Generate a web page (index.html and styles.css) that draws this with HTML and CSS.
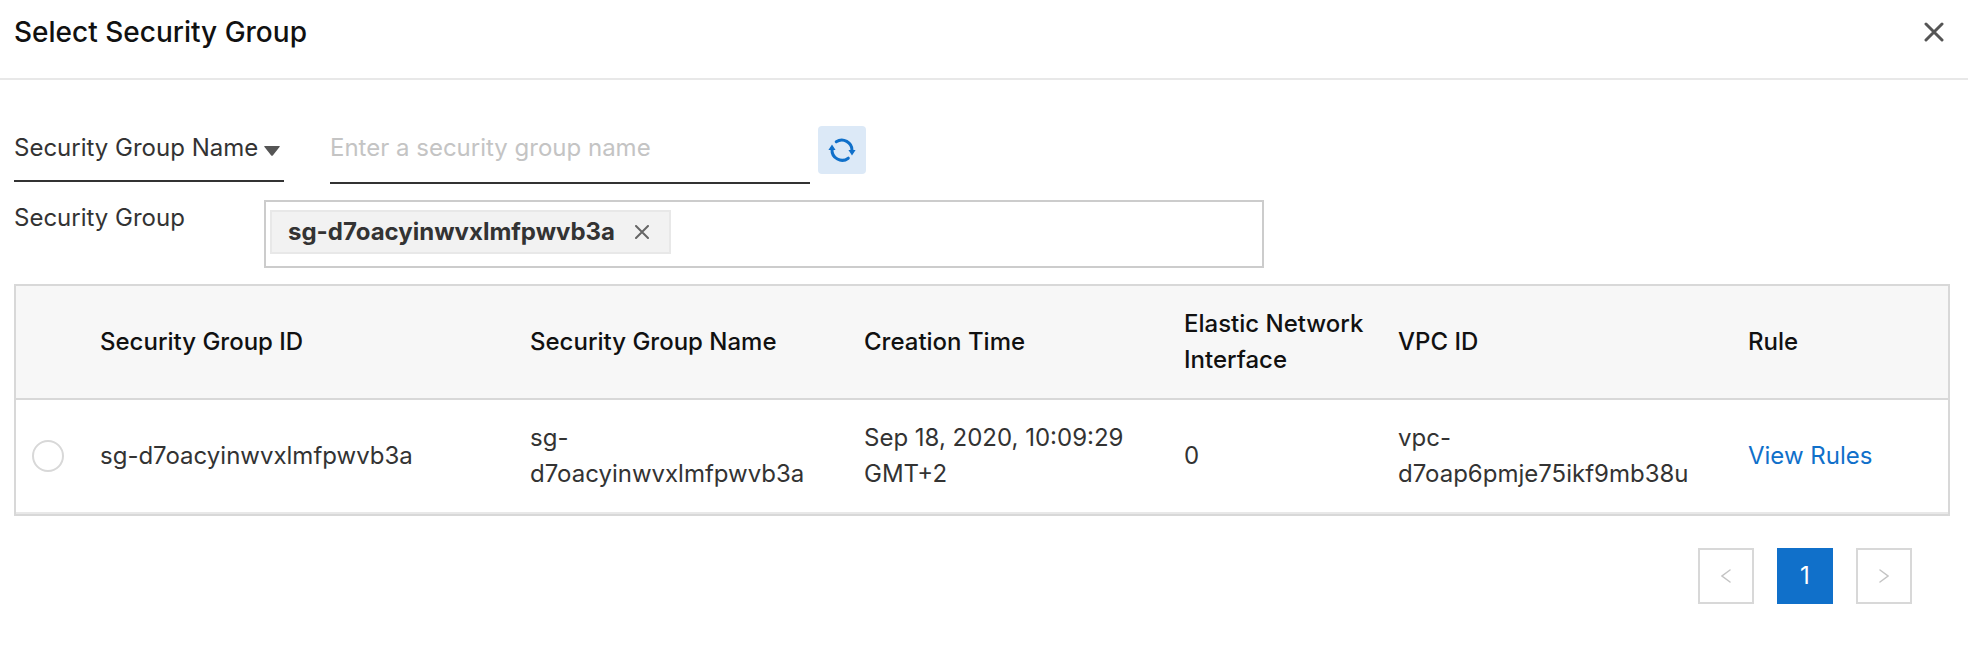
FILE: index.html
```html
<!DOCTYPE html>
<html lang="en">
<head>
<meta charset="utf-8">
<meta name="viewport" content="width=device-width, initial-scale=1">
<title>Select Security Group</title>
<link rel="stylesheet" href="styles.css">
</head>
<body>
<main class="dialog">
  <header class="dialog-header">
    <h1 class="dialog-title">Select Security Group</h1>
    <button class="close-button" type="button" aria-label="Close">
      <svg class="icon" width="20" height="20" viewBox="0 0 20 20"><path d="M2 2 18 18M18 2 2 18" stroke-width="3"/></svg>
    </button>
  </header>
  <div class="dialog-body">
    <form class="filters">
      <div class="filter-field">
        <select class="filter-select" aria-label="Filter by">
          <option>Security Group Name</option>
        </select>
        <svg class="caret" width="16" height="10" viewBox="0 0 16 10"><path d="M.5 0H15.500Q16 .5 15.500 1L9 9.300Q8 10.400 7 9.300L.5 1Q0 .5 .5 0Z"/></svg>
      </div>
      <input class="filter-input" type="text" aria-label="Security group name" placeholder="Enter a security group name">
      <button class="refresh-button" type="button" aria-label="Refresh">
        <svg class="refresh-icon" width="28" height="28" viewBox="0 0 28 28">
          <path class="refresh-arc" d="M8.200 5.800A10.200 10.200 0 0 1 24 14.500M20.300 22.200A10.200 10.200 0 0 1 4 13.500"/>
          <path class="refresh-head" d="M20.400 14H27.600L24 19.500ZM.4 14H7.600L4 8.500Z"/>
        </svg>
      </button>
    </form>
    <div class="selection">
      <span class="selection-label" id="selection-label">Security Group</span>
      <div class="selection-box" role="group" aria-labelledby="selection-label">
        <span class="tag">
          <span>sg-d7oacyinwvxlmfpwvb3a</span>
          <button class="tag-remove" type="button" aria-label="Remove">
            <svg class="icon" width="14" height="14" viewBox="0 0 14 14"><path d="M1 1 13 13M13 1 1 13" stroke-width="2"/></svg>
          </button>
        </span>
      </div>
    </div>
    <table class="groups">
      <colgroup>
        <col class="col-radio"><col class="col-id"><col class="col-name"><col class="col-time"><col class="col-eni"><col class="col-vpc"><col class="col-rule">
      </colgroup>
      <thead>
        <tr>
          <td></td>
          <th scope="col">Security Group ID</th>
          <th scope="col">Security Group Name</th>
          <th scope="col">Creation Time</th>
          <th scope="col">Elastic Network Interface</th>
          <th scope="col">VPC ID</th>
          <th scope="col">Rule</th>
        </tr>
      </thead>
      <tbody>
        <tr>
          <td><input class="row-radio" type="radio" name="group" aria-label="sg-d7oacyinwvxlmfpwvb3a"></td>
          <td>sg-d7oacyinwvxlmfpwvb3a</td>
          <td>sg-<wbr>d7oacyinwvxlmfpwvb3a</td>
          <td>Sep 18, 2020, 10:09:29 GMT+2</td>
          <td>0</td>
          <td>vpc-<wbr>d7oap6pmje75ikf9mb38u</td>
          <td><a class="link" href="#rules">View Rules</a></td>
        </tr>
      </tbody>
    </table>
    <nav class="pagination" aria-label="Pages">
      <button class="page-button" type="button" aria-label="Previous page" disabled>
        <svg class="icon" width="10" height="14" viewBox="0 0 10 14"><path d="M9 1 1 7 9 13" stroke-width="1.500"/></svg>
      </button>
      <button class="page-button page-current" type="button" aria-current="page">1</button>
      <button class="page-button" type="button" aria-label="Next page" disabled>
        <svg class="icon" width="10" height="14" viewBox="0 0 10 14"><path d="M1 1 9 7 1 13" stroke-width="1.500"/></svg>
      </button>
    </nav>
  </div>
</main>
</body>
</html>
```
FILE: styles.css
```css
* {
  box-sizing: border-box;
}

body {
  margin: 0;
  background: #fff;
  color: #333;
  font-family: Inter, "Liberation Sans", sans-serif;
  font-size: 24px;
  line-height: 36px;
}

button,
input,
select {
  margin: 0;
  padding: 0;
  border: 0;
  border-radius: 0;
  background: none;
  color: inherit;
  font: inherit;
}

.icon {
  display: block;
  fill: none;
  stroke: currentColor;
  stroke-linecap: round;
}

.dialog-header {
  display: flex;
  align-items: center;
  justify-content: space-between;
  height: 80px;
  padding: 0 24px 14px 14px;
  border-bottom: 2px solid #e8e8e8;
}

.dialog-title {
  margin: 0;
  color: #111;
  font-size: 28px;
  font-weight: 500;
  line-height: 36px;
}

.close-button {
  color: #555;
}

.dialog-body {
  padding: 46px 18px 48px 14px;
}

.filters {
  display: flex;
  align-items: flex-start;
}

.filter-field {
  display: grid;
  align-items: center;
  width: 270px;
  height: 56px;
  margin-right: 46px;
  border-bottom: 2px solid #333;
}

.filter-select,
.caret {
  grid-area: 1 / 1;
}

.filter-select {
  width: 100%;
  height: 44px;
  margin-bottom: 10px;
  appearance: none;
}

.caret {
  justify-self: end;
  margin: 0 4px 4px 0;
  fill: #555;
  pointer-events: none;
}

.filter-input {
  width: 480px;
  height: 58px;
  padding-bottom: 14px;
  border-bottom: 2px solid #333;
}

.filter-input::placeholder {
  color: #c4c4c4;
  opacity: 1;
}

.refresh-button {
  display: grid;
  place-items: center;
  width: 48px;
  height: 48px;
  margin-left: 8px;
  border-radius: 4px;
  background: #dce9f7;
}

.refresh-arc {
  fill: none;
  stroke: #1070ca;
  stroke-width: 3;
  stroke-linecap: round;
}

.refresh-head {
  fill: #1070ca;
}

.selection {
  display: flex;
  align-items: flex-start;
  margin: 16px 0;
}

.selection-label {
  width: 250px;
}

.selection-box {
  display: flex;
  align-items: flex-start;
  width: 1000px;
  height: 68px;
  padding: 8px 4px;
  border: 2px solid #ccc;
}

.tag {
  display: flex;
  align-items: center;
  gap: 20px;
  height: 44px;
  padding: 0 20px 0 16px;
  border: 2px solid #e8e8e8;
  background: #f2f2f2;
  font-weight: 700;
}

.tag-remove {
  color: #666;
}

.groups {
  width: 100%;
  table-layout: fixed;
  border: 2px solid #d8d8d8;
  border-collapse: separate;
  border-spacing: 0;
}

.col-radio { width: 68px; }
.col-id { width: 430px; }
.col-name { width: 334px; }
.col-time { width: 320px; }
.col-eni { width: 214px; }
.col-vpc { width: 350px; }
.col-rule { width: 216px; }

.groups th,
.groups td {
  padding: 20px 12px 20px 16px;
  text-align: left;
  vertical-align: middle;
}

.groups th {
  color: #111;
  font-weight: 500;
}

.groups thead th,
.groups thead td {
  border-bottom: 2px solid #d8d8d8;
  background: #f7f7f7;
}

.groups tbody td {
  border-bottom: 2px solid #e8e8e8;
}

.row-radio {
  display: block;
  width: 32px;
  height: 32px;
  border: 2px solid #d8d8d8;
  border-radius: 50%;
  background: #fff;
  appearance: none;
}

.link {
  color: #1070ca;
  text-decoration: none;
}

.pagination {
  display: flex;
  justify-content: flex-end;
  gap: 23px;
  margin-top: 32px;
  padding-right: 38px;
}

.page-button {
  display: grid;
  place-items: center;
  width: 56px;
  height: 56px;
  border: 2px solid #d8d8d8;
  color: #c4c4c4;
}

.page-current {
  border-color: #1070ca;
  background: #1070ca;
  color: #fff;
}
```
